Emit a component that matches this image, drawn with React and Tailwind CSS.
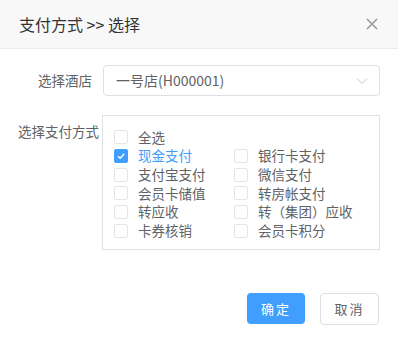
import React from "react";

const font = { fontFamily: '"Microsoft YaHei", "Noto Sans CJK SC", "Liberation Sans", sans-serif' };

function Box({ checked }) {
  return checked ? (
    <span className="w-[14px] h-[14px] rounded-[2px] bg-[#409eff] border border-[#409eff] flex items-center justify-center shrink-0">
      <svg width="10" height="10" viewBox="0 0 10 10"><path d="M2 5.2 L4.2 7.3 L8.2 2.8" fill="none" stroke="white" strokeWidth="1.3" /></svg>
    </span>
  ) : (
    <span className="w-[14px] h-[14px] rounded-[2px] border border-[#e4e4e4] bg-white shrink-0" />
  );
}

function Item({ label, checked }) {
  return (
    <div className="flex items-center h-[18.7px]">
      <Box checked={checked} />
      <span className={`ml-[10px] text-[13.5px] leading-none ${checked ? "text-[#409eff]" : "text-[#606266]"}`}>{label}</span>
    </div>
  );
}

export default function App() {
  const left = ["现金支付", "支付宝支付", "会员卡储值", "转应收", "卡券核销"];
  const right = ["银行卡支付", "微信支付", "转房帐支付", "转（集团）应收", "会员卡积分"];
  return (
    <div className="w-[398px] h-[343px] bg-white relative" style={font}>
      <div className="h-[49px] bg-[#f8f8f8] border-b border-[#ececec] flex items-center justify-between pl-[19px] pr-[20px]">
        <span className="text-[16px] text-[#333]">支付方式 &gt;&gt; 选择</span>
        <svg width="12" height="12" viewBox="0 0 12 12"><path d="M1 1 L11 11 M11 1 L1 11" stroke="#999" strokeWidth="1.5" /></svg>
      </div>
      <div className="flex items-center mt-[16px]">
        <span className="w-[92px] text-right text-[13.5px] text-[#606266]">选择酒店</span>
        <div className="ml-[11px] w-[277px] h-[31px] border border-[#dcdfe6] rounded-[4px] flex items-center justify-between pl-[12px] pr-[11px]">
          <span className="text-[14px] text-[#606266]">一号店(H000001)</span>
          <svg width="12" height="8" viewBox="0 0 12 8"><path d="M1 1.5 L6 6.5 L11 1.5" fill="none" stroke="#c8c8c8" strokeWidth="1" /></svg>
        </div>
      </div>
      <div className="flex mt-[19px]">
        <span className="w-[102px] pl-[18px] text-[13.5px] text-[#606266] pt-[6px] whitespace-nowrap">选择支付方式</span>
        <div className="w-[278px] h-[135px] border border-[#e2e2e2] pl-[11px] pt-[12px]">
          <Item label="全选" />
          <div className="flex">
            <div className="w-[120px]">{left.map((l, i) => <Item key={l} label={l} checked={i === 0} />)}</div>
            <div>{right.map((l) => <Item key={l} label={l} />)}</div>
          </div>
        </div>
      </div>
      <div className="flex justify-end gap-[15px] pr-[19px] mt-[43px]">
        <button className="w-[58px] h-[31px] rounded-[4px] bg-[#409eff] text-white text-[13px] tracking-[2px]">确定</button>
        <button className="w-[59px] h-[32px] rounded-[4px] border border-[#dcdfe6] bg-white text-[#606266] text-[13px] tracking-[2px]">取消</button>
      </div>
    </div>
  );
}
